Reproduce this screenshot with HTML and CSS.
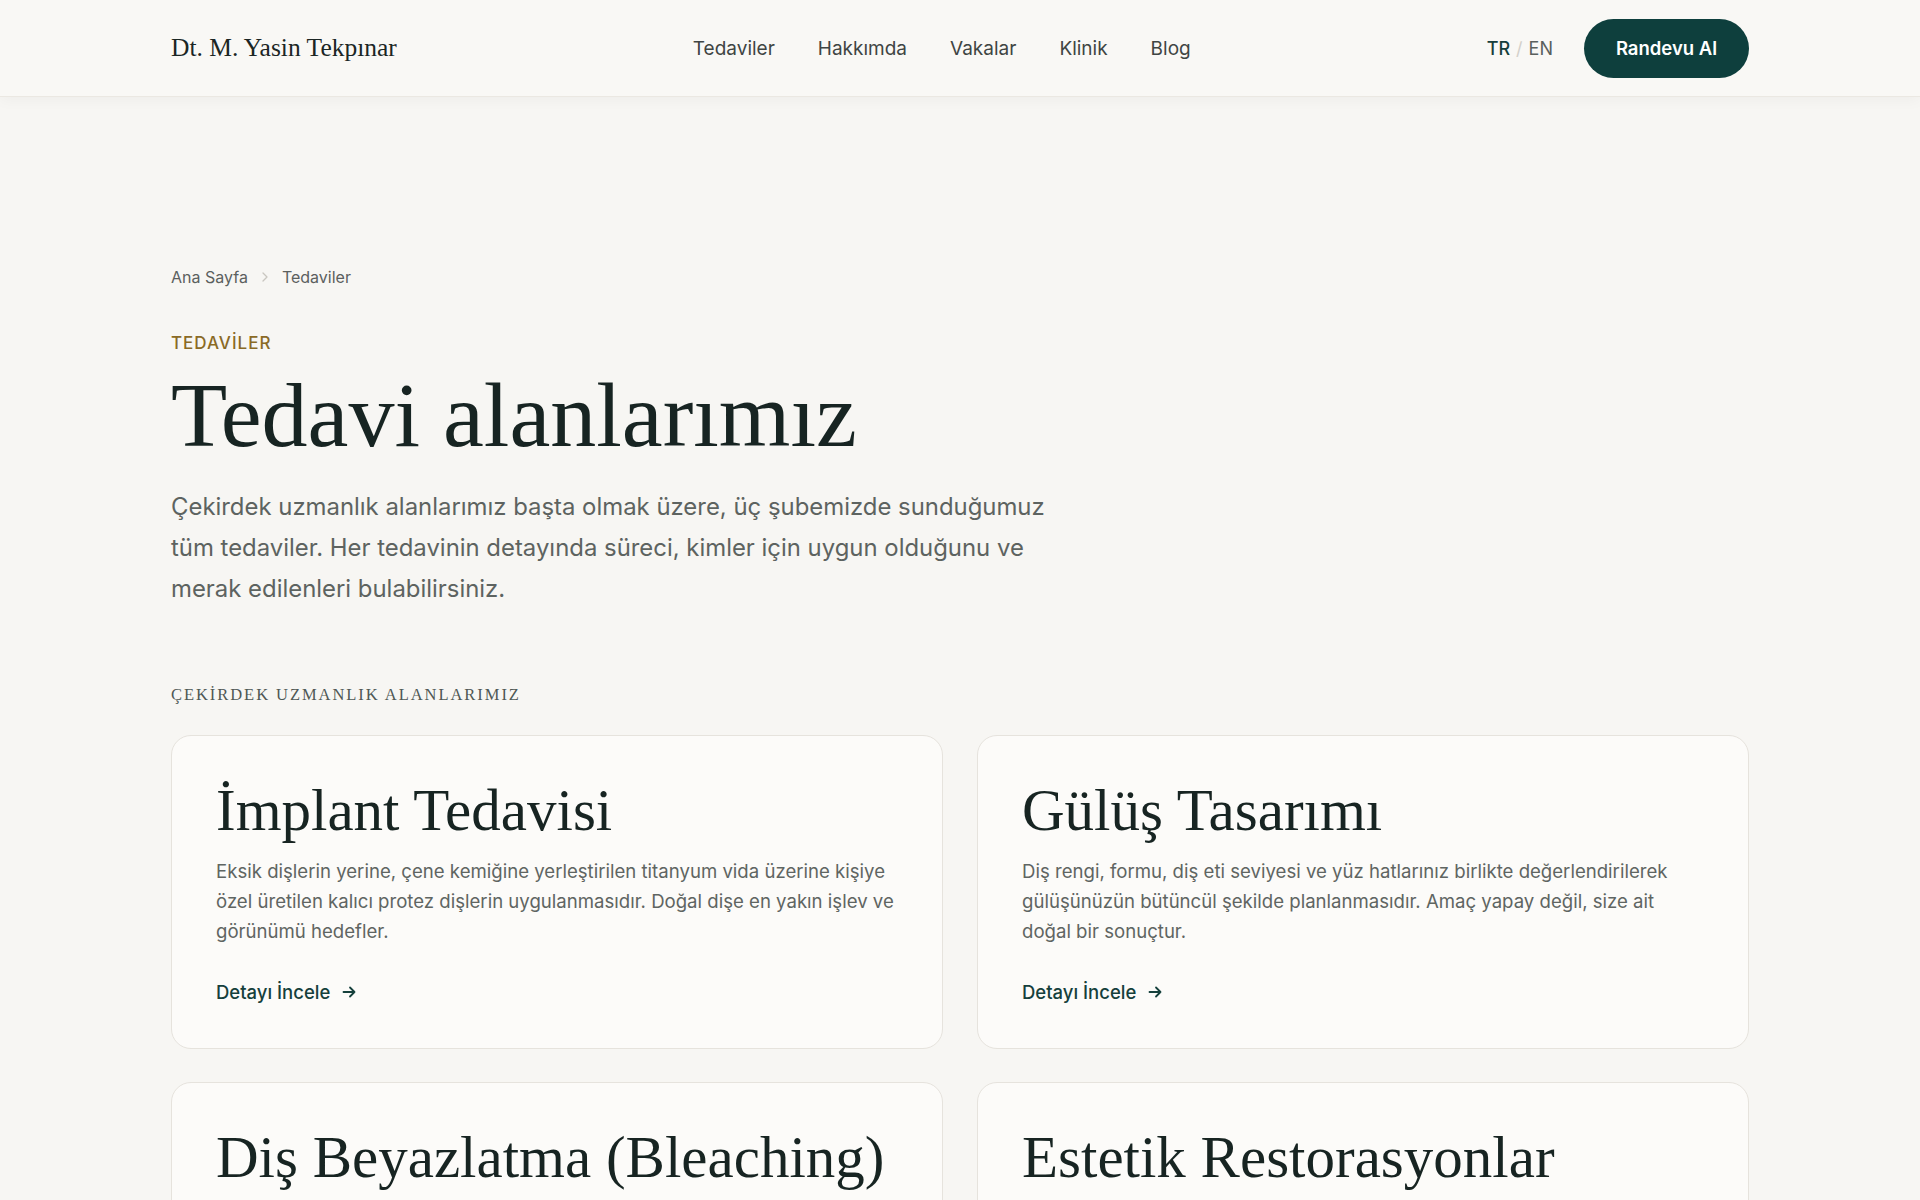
FILE: index.html
```html
<!DOCTYPE html>
<html lang="tr">
  <head>
    <meta charset="UTF-8" />
    <meta name="viewport" content="width=device-width, initial-scale=1.0" />
    <title>Tedaviler | Dt. M. Yasin Tekpınar</title>
    <link rel="stylesheet" href="styles.css">
  </head>
  <body>
    <header class="site-header">
      <div class="container header-inner">
        <a class="logo" href="#">Dt. M. Yasin Tekpınar</a>
        <nav class="main-nav">
          <a href="#">Tedaviler</a>
          <a href="#">Hakkımda</a>
          <a href="#">Vakalar</a>
          <a href="#">Klinik</a>
          <a href="#">Blog</a>
        </nav>
        <div class="header-actions">
          <div class="lang">
            <a class="lang-active" href="#">TR</a>
            <span class="lang-sep">/</span>
            <a href="#">EN</a>
          </div>
          <a class="btn-primary" href="#">Randevu Al</a>
        </div>
      </div>
    </header>

    <main class="container page">
      <div class="breadcrumb">
        <a href="#">Ana Sayfa</a>
        <svg class="crumb-sep" width="14" height="14" viewBox="0 0 14 14" fill="none" stroke="currentColor" stroke-width="1.3" stroke-linecap="round" stroke-linejoin="round"><path d="M5 3l4 4-4 4"/></svg>
        <span>Tedaviler</span>
      </div>

      <p class="eyebrow">TEDAVİLER</p>
      <h1 class="page-title">Tedavi alanlarımız</h1>
      <p class="lead">
        Çekirdek uzmanlık alanlarımız başta olmak üzere, üç şubemizde sunduğumuz
        tüm tedaviler. Her tedavinin detayında süreci, kimler için uygun olduğunu ve
        merak edilenleri bulabilirsiniz.
      </p>

      <h2 class="section-label">ÇEKİRDEK UZMANLIK ALANLARIMIZ</h2>

      <div class="card-grid">
        <article class="card">
          <h3>İmplant Tedavisi</h3>
          <p>Eksik dişlerin yerine, çene kemiğine yerleştirilen titanyum vida üzerine kişiye özel üretilen kalıcı protez dişlerin uygulanmasıdır. Doğal dişe en yakın işlev ve görünümü hedefler.</p>
          <a class="card-link" href="#">Detayı İncele
            <svg width="18" height="18" viewBox="0 0 18 18" fill="none" stroke="currentColor" stroke-width="1.8" stroke-linecap="round" stroke-linejoin="round"><path d="M3.5 9h11M10 4.5L14.5 9 10 13.5"/></svg>
          </a>
        </article>
        <article class="card">
          <h3>Gülüş Tasarımı</h3>
          <p>Diş rengi, formu, diş eti seviyesi ve yüz hatlarınız birlikte değerlendirilerek gülüşünüzün bütüncül şekilde planlanmasıdır. Amaç yapay değil, size ait doğal bir sonuçtur.</p>
          <a class="card-link" href="#">Detayı İncele
            <svg width="18" height="18" viewBox="0 0 18 18" fill="none" stroke="currentColor" stroke-width="1.8" stroke-linecap="round" stroke-linejoin="round"><path d="M3.5 9h11M10 4.5L14.5 9 10 13.5"/></svg>
          </a>
        </article>
        <article class="card">
          <h3>Diş Beyazlatma (Bleaching)</h3>
          <p>Diş yüzeyindeki renklenmelerin, diş hekimi kontrolünde uygulanan beyazlatma jelleri ile açılmasıdır. Diş dokusuna zarar vermeden daha aydınlık bir gülüş sağlar.</p>
          <a class="card-link" href="#">Detayı İncele
            <svg width="18" height="18" viewBox="0 0 18 18" fill="none" stroke="currentColor" stroke-width="1.8" stroke-linecap="round" stroke-linejoin="round"><path d="M3.5 9h11M10 4.5L14.5 9 10 13.5"/></svg>
          </a>
        </article>
        <article class="card">
          <h3>Estetik Restorasyonlar</h3>
          <p>Kırık, çürük veya renk değiştirmiş dişlerin doğal görünümlü kompozit ve seramik malzemelerle onarılmasıdır.</p>
          <a class="card-link" href="#">Detayı İncele
            <svg width="18" height="18" viewBox="0 0 18 18" fill="none" stroke="currentColor" stroke-width="1.8" stroke-linecap="round" stroke-linejoin="round"><path d="M3.5 9h11M10 4.5L14.5 9 10 13.5"/></svg>
          </a>
        </article>
      </div>
    </main>
  </body>
</html>
```

FILE: styles.css
```css
* {
  box-sizing: border-box;
}
body {
  margin: 0;
  background-color: #f7f6f3;
  color: #1b2624;
  font-family: "Inter", "Noto Sans", sans-serif;
}
a {
  color: inherit;
  text-decoration: none;
}
.container {
  max-width: 1578px;
  margin: 0 auto;
}

/* header */
.site-header {
  background-color: #f9f8f5;
  box-shadow: 0 1px 0 #ebe8e2, 0 4px 14px rgba(0, 0, 0, 0.04);
}
.header-inner {
  height: 96px;
  display: flex;
  align-items: center;
  justify-content: space-between;
}
.logo {
  font-family: "Liberation Serif", serif;
  font-size: 25.5px;
  color: #1b2624;
}
.main-nav {
  display: flex;
  gap: 43px;
  font-size: 19px;
  color: #3f4543;
}
.header-actions {
  display: flex;
  align-items: center;
  gap: 31px;
}
.lang {
  display: flex;
  gap: 6px;
  font-size: 18px;
  color: #5a605d;
}
.lang-active {
  color: #163e3b;
  font-weight: 500;
}
.lang-sep {
  color: #d3d0ca;
}
.btn-primary {
  display: inline-flex;
  align-items: center;
  justify-content: center;
  width: 165px;
  height: 59px;
  border-radius: 30px;
  background-color: #0e3f3d;
  color: #ffffff;
  font-size: 18.5px;
  font-weight: 600;
}

/* page intro */
.page {
  padding-top: 171px;
  padding-bottom: 60px;
}
.breadcrumb {
  display: flex;
  align-items: center;
  gap: 10px;
  font-size: 16px;
  color: #5b605e;
}
.crumb-sep {
  color: #c9c6c0;
}
.eyebrow {
  margin: 46px 0 0;
  font-size: 17px;
  font-weight: 500;
  letter-spacing: 1px;
  color: #8a6a26;
}
.page-title {
  margin: 12px 0 0;
  font-family: "Liberation Serif", serif;
  font-weight: 400;
  font-size: 92px;
  line-height: 1.1;
  color: #172422;
}
.lead {
  max-width: 920px;
  margin: 20px 0 0;
  font-size: 23.9px;
  line-height: 41px;
  color: #5d6360;
}

.section-label {
  margin: 76px 0 0;
  font-family: "Liberation Serif", serif;
  font-size: 16.5px;
  font-weight: 400;
  letter-spacing: 1.95px;
  color: #4f5855;
}

/* cards */
.card-grid {
  display: grid;
  grid-template-columns: 1fr 1fr;
  gap: 33px 34px;
  margin-top: 30px;
}
.card {
  background-color: #fcfbf9;
  border: 1px solid #e6e3dd;
  border-radius: 20px;
  padding: 41px 44px 45px;
}
.card h3 {
  margin: 0;
  font-family: "Liberation Serif", serif;
  font-weight: 400;
  font-size: 59px;
  line-height: 1.15;
  color: #172422;
}
.card p {
  margin: 11px 0 0;
  font-size: 18.6px;
  line-height: 30px;
  color: #5f6562;
}
.card-link {
  display: inline-flex;
  align-items: center;
  gap: 10px;
  margin-top: 35px;
  font-size: 18.5px;
  font-weight: 450;
  color: #15403c;
}
```
